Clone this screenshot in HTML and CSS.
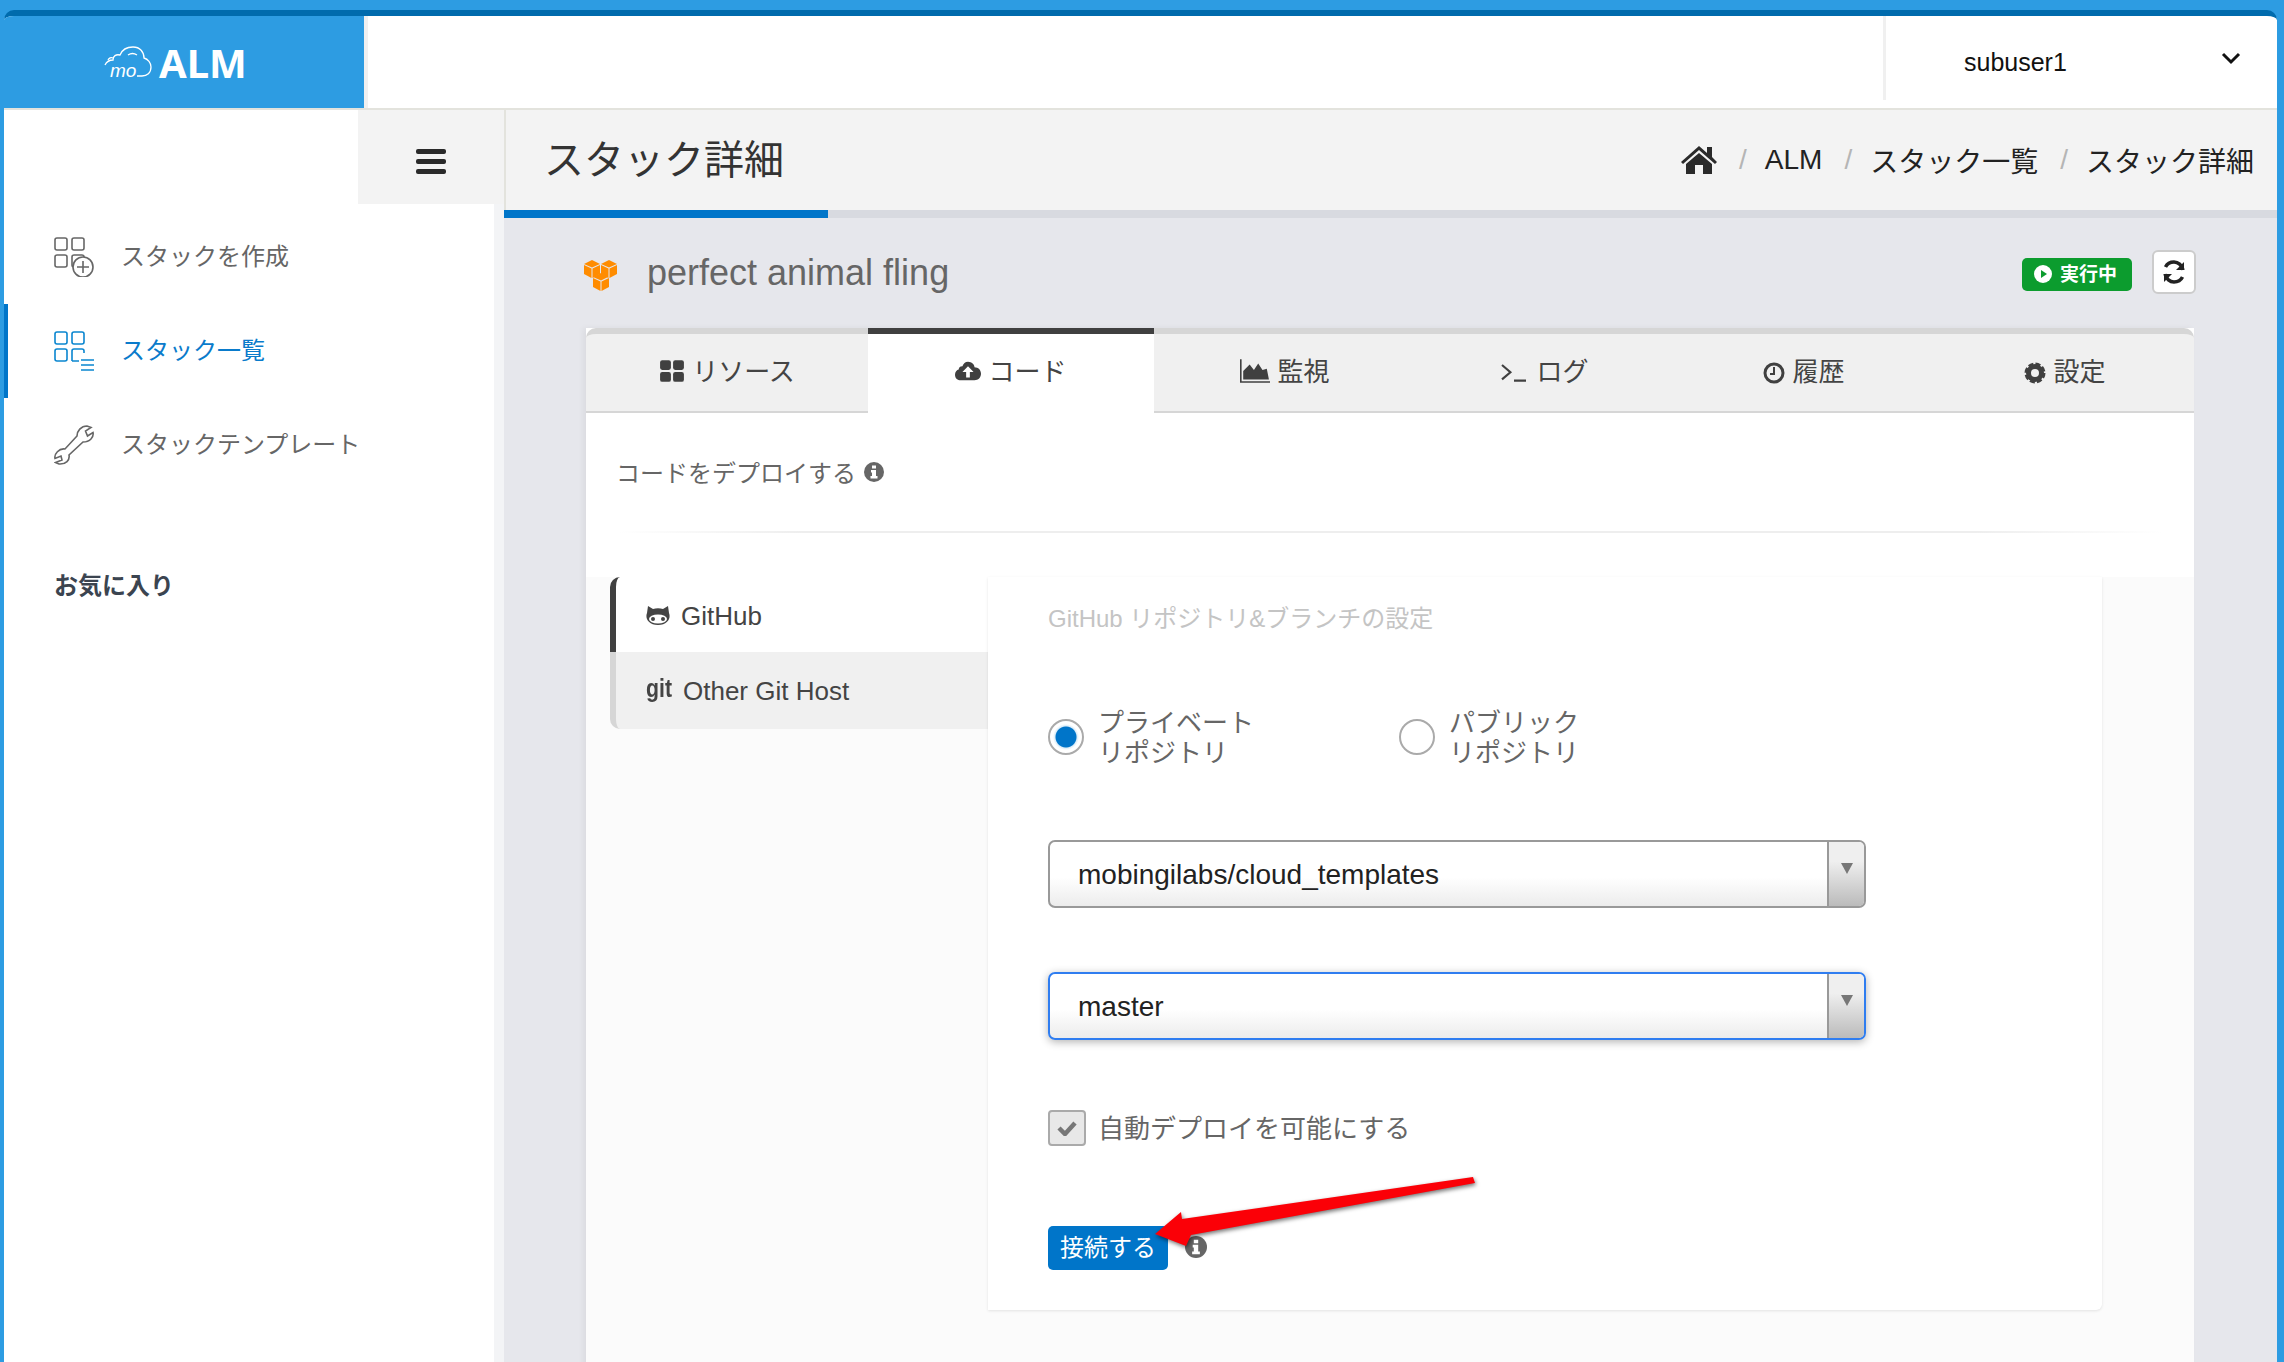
FILE: index.html
```html
<!DOCTYPE html>
<html>
<head>
  <meta charset="utf-8">
  <title>ALM</title>
  <link rel="stylesheet" href="styles.css">
</head>
<body>
  <div class="window">
    <header class="topbar">
      <div class="logo">
        <svg class="logo-cloud" viewBox="0 0 48 34">
          <path d="M1 19c2-4 5-5 8-5 0-4 3-6 7-5 2-5 7-8 13-8 7 0 11 5 11 11 4 1 7 5 7 9 0 6-4 9-9 9h-5"/>
          <path d="M4 14c1-2 3-3 5-2M24 9c3-2 6-2 9 0"/>
          <text class="logo-mo" x="6" y="31">mo</text>
        </svg>
        <span class="logo-text">ALM</span>
      </div>
      <div class="topbar-fill"></div>
      <div class="user">
        <span class="user-name">subuser1</span>
        <svg class="user-caret" viewBox="0 0 20 14"><path d="M2 3l8 8 8-8"/></svg>
      </div>
    </header>

    <div class="layout">
      <aside class="sidebar">
        <div class="toggle"><span></span><span></span><span></span></div>
        <nav>
          <a class="nav-item">
            <svg class="nav-icon" viewBox="0 0 40 40">
              <rect x="1" y="1" width="12" height="12" rx="2"/><rect x="18" y="1" width="12" height="12" rx="2"/>
              <rect x="1" y="18" width="12" height="12" rx="2"/><rect x="18" y="18" width="12" height="12" rx="2"/>
              <circle class="white" cx="29" cy="30" r="10"/><path d="M29 24v12M23 30h12"/>
            </svg>
            <span class="nav-label">スタックを作成</span>
          </a>
          <a class="nav-item active">
            <svg class="nav-icon" viewBox="0 0 40 40">
              <rect x="1" y="1" width="12" height="12" rx="2"/><rect x="18" y="1" width="12" height="12" rx="2"/>
              <rect x="1" y="18" width="12" height="12" rx="2"/>
              <path d="M18 30v-10a2 2 0 0 1 2-2h8a2 2 0 0 1 2 2v2M18 30h7M27 29h13M27 34h13M27 39h13"/>
            </svg>
            <span class="nav-label">スタック一覧</span>
          </a>
          <a class="nav-item">
            <svg class="nav-icon" viewBox="0 0 40 40">
              <path d="M23 11C23 6 27 1 33 1L37 2.500 31.500 6 33.500 11 39 7.500C40 12 36 17 29 17L15 30C16 35 12 39.500 5 39L1.500 37.500 8 35 7 31 1 33.500C0 29 5 23 11 24z"/>
            </svg>
            <span class="nav-label">スタックテンプレート</span>
          </a>
        </nav>
        <div class="favorites">お気に入り</div>
      </aside>

      <main class="content">
        <div class="titlebar">
          <h1 class="page-title">スタック詳細</h1>
          <div class="crumbs">
            <svg class="home" viewBox="0 0 36 28"><path d="M18 0l8 7V1h5v10l5 5-2 2L18 4 2 18l-2-2zM18 7l13 11v10H22v-9h-8v9H5V18z"/></svg>
            <span class="sep">/</span><span>ALM</span>
            <span class="sep">/</span><span>スタック一覧</span>
            <span class="sep">/</span><span>スタック詳細</span>
          </div>
        </div>
        <div class="progress"><div class="progress-bar"></div></div>

        <div class="page">
          <div class="stack-row">
            <svg class="aws" viewBox="0 0 33 31">
              <path d="M0 4l8-4 8 4-8 3.500z"/><path d="M17 4l8-4 8 4-8 3.500z"/>
              <path d="M0 5l7.500 3.500v9.500l-7.500-4zM16 5L8.500 8.500v9.500l7.500-4zM17 5l7.500 3.500v9.500l-7.500-4zM33 5l-7.500 3.500v9.500l7.500-4z"/>
              <path d="M9 17l8-4 7 4-7 3.500z"/>
              <path d="M9 18l7.500 3.500V31L9 27zM25 18l-7.500 3.500V31l7.500-4z"/>
            </svg>
            <span class="stack-name">perfect animal fling</span>
            <span class="badge">
              <svg class="badge-icon" viewBox="0 0 18 18"><circle cx="9" cy="9" r="9"/><path class="green" d="M7 5l6 4-6 4z"/></svg>
              実行中
            </span>
            <button class="refresh">
              <svg viewBox="0 0 22 24"><path d="M20 10C19 5 15 2 11 2 7 2 4 4 2.500 7M2 14c1 5 5 8 9 8 4 0 7-2 8.500-5"/><path class="solid" d="M21 2v8h-8zM1 22v-8h8z"/></svg>
            </button>
          </div>

          <section class="panel">
            <div class="tabs">
              <div class="tab">
                <svg class="tab-icon" viewBox="0 0 24 20"><rect x="1" y="0" width="10" height="9" rx="2"/><rect x="13" y="0" width="10" height="9" rx="2"/><rect x="1" y="11" width="10" height="9" rx="2"/><rect x="13" y="11" width="10" height="9" rx="2"/></svg>
                リソース
              </div>
              <div class="tab current">
                <svg class="tab-icon" viewBox="0 0 28 20"><path d="M6 20c-3 0-6-2-6-6 0-3 2-5 4-5.500C4 7 5 5 8 5c1-3 3-5 6-5 4 0 7 3 7 6 4 0 7 3 7 7 0 4-3 7-7 7z"/><path class="white" d="M14 5l6 6h-4v6h-4v-6H8z"/></svg>
                コード
              </div>
              <div class="tab">
                <svg class="tab-icon wide" viewBox="0 0 28 22"><path d="M0 0h1.500v20.500H28V22H0zM3 19V11l6-6 4 5 4-6 4 6 4-1 2 10z"/></svg>
                監視
              </div>
              <div class="tab">
                <svg class="tab-icon wide term" viewBox="0 0 24 20"><path d="M2 5l7 6-7 6M12 18h10"/></svg>
                ログ
              </div>
              <div class="tab">
                <svg class="tab-icon small" viewBox="0 0 22 22"><circle class="ring" cx="11" cy="11" r="9"/><path class="hand" d="M11 5v7H7"/></svg>
                履歴
              </div>
              <div class="tab">
                <svg class="tab-icon small" viewBox="0 0 22 22"><circle class="cog-teeth" cx="11" cy="11" r="9"/><circle class="ring cog" cx="11" cy="11" r="5.500"/></svg>
                設定
              </div>
            </div>

            <div class="deploy-head">
              <span class="deploy-label">コードをデプロイする</span>
              <svg class="info" viewBox="0 0 20 20"><circle cx="10" cy="10" r="10"/><path class="white" d="M8 3.500h4v3H8zM7 8h5v6h1.500v2.500h-7V14H8v-3.500H7z"/></svg>
            </div>
            <div class="deploy-rule"></div>
            <div class="deploy-gap"></div>

            <div class="source">
              <div class="source-tabs">
                <div class="source-tab current">
                  <svg class="octo" viewBox="0 0 24 20"><path d="M2 1l5 3c3-1 7-1 10 0l5-3 1 7c2 5-1 12-11 12S-1 13 1 8z"/><ellipse class="white" cx="12" cy="14" rx="9" ry="4.500"/><circle cx="7" cy="14" r="2"/><circle cx="17" cy="14" r="2"/></svg>
                  GitHub
                </div>
                <div class="source-tab"><span class="git">git</span>Other Git Host</div>
              </div>

              <div class="card">
                <h2 class="card-title">GitHub リポジトリ&amp;ブランチの設定</h2>

                <div class="radios">
                  <label class="radio-item first"><span class="radio on"></span><span class="radio-label">プライベート<br>リポジトリ</span></label>
                  <label class="radio-item"><span class="radio"></span><span class="radio-label">パブリック<br>リポジトリ</span></label>
                </div>

                <div class="select">
                  <span class="select-value">mobingilabs/cloud_templates</span>
                  <span class="select-arrow"></span>
                </div>
                <div class="select focus">
                  <span class="select-value">master</span>
                  <span class="select-arrow"></span>
                </div>

                <div class="check-row">
                  <span class="check"><svg viewBox="0 0 20 16"><path d="M2 8l6 6L18 3"/></svg></span>
                  <span class="check-label">自動デプロイを可能にする</span>
                </div>

                <div class="submit-row">
                  <button class="submit">接続する</button>
                  <svg class="info info-big" viewBox="0 0 20 20"><circle cx="10" cy="10" r="10"/><path class="white" d="M8 3.500h4v3H8zM7 8h5v6h1.500v2.500h-7V14H8v-3.500H7z"/></svg>
                </div>
              </div>
            </div>
          </section>
        </div>
      </main>
    </div>
  </div>

  <svg class="red-arrow" viewBox="0 0 340 90"><path d="M5 64L31 42 32 49 323 7 325 13 41 65 36 76z"/></svg>
</body>
</html>
```

FILE: styles.css
```css
* { box-sizing: border-box; }
html, body { height: 100%; }
body {
  margin: 0;
  height: 1362px;
  overflow: hidden;
  position: relative;
  padding: 10px 7px 0 4px;
  background: #2d9ce2;
  font-family: "Liberation Sans", "Noto Sans CJK JP", sans-serif;
  color: #333;
}
svg { display: block; flex: none; }
.white { fill: #fff; }

.window {
  height: 1352px;
  background: #fff;
  border-top: 6px solid #006bad;
  border-radius: 10px 10px 0 0;
  overflow: hidden;
}

/* top bar */
.topbar {
  display: flex;
  height: 94px;
  border-bottom: 2px solid #e3e3dd;
}
.logo {
  width: 364px;
  background: #2d9ce2;
  border-right: 4px solid #f0f0f0;
  display: flex;
  align-items: center;
  padding-left: 100px;
  gap: 7px;
  color: #fff;
}
.logo-cloud { width: 48px; height: 34px; margin-top: 2px; }
.logo-cloud path { fill: none; stroke: #fff; stroke-width: 1.300; }
.logo-mo { fill: #fff; font-size: 19px; font-style: italic; }
.logo-text {
  font-family: "Noto Sans", sans-serif;
  font-weight: 700;
  font-size: 40px;
  line-height: 1;
  margin-top: 2px;
}
.topbar-fill { flex: 1; }
.user {
  width: 394px;
  height: 84px;
  border-left: 3px solid #f0f0f0;
  display: flex;
  align-items: center;
  justify-content: space-between;
  padding: 8px 36px 0 78px;
  color: #111;
}
.user-name { font-size: 25px; }
.user-caret { width: 20px; height: 14px; margin-bottom: 8px; }
.user-caret path { fill: none; stroke: #111; stroke-width: 3; }

.layout { display: flex; height: 1252px; }

/* sidebar */
.sidebar {
  width: 500px;
  flex: none;
  border-right: 10px solid #f3f4f6;
}
.toggle {
  width: 146px;
  height: 94px;
  margin-left: 354px;
  padding-top: 8px;
  background: #f3f3f3;
  position: relative;
  display: flex;
  flex-direction: column;
  justify-content: center;
  align-items: center;
  gap: 5px;
}
.toggle span {
  width: 30px;
  height: 5px;
  border-radius: 2px;
  background: #2a2a2a;
}
nav { margin-top: 6px; }
.nav-item {
  display: flex;
  align-items: center;
  gap: 27px;
  height: 94px;
  padding-left: 46px;
  border-left: 4px solid transparent;
  font-size: 24px;
  color: #666;
}
.nav-label { margin-bottom: 5px; }
.nav-item.active { color: #0a7bcb; border-left-color: #0075c9; }
.nav-icon { width: 40px; height: 40px; }
.nav-icon rect, .nav-icon path, .nav-icon circle { fill: none; stroke: #666; stroke-width: 1.600; }
.nav-icon circle.white { fill: #fff; }
.active .nav-icon rect, .active .nav-icon path { stroke: #0a86d0; }
.favorites {
  margin: 74px 0 0 50px;
  font-size: 24px;
  font-weight: 700;
  color: #3b4450;
}

/* main */
.content {
  flex: 1;
  background: #e6e7ec;
  min-width: 0;
}
.titlebar {
  height: 100px;
  background: #f3f3f3;
  border-left: 2px solid #e3e3dd;
  display: flex;
  align-items: center;
  justify-content: space-between;
  padding: 0 23px 0 38px;
}
.page-title { margin: 0 0 6px; font-size: 40px; font-weight: 400; color: #333; }
.crumbs { display: flex; align-items: center; font-size: 28px; color: #222; }
.home { width: 36px; height: 28px; fill: #2a2a2a; }
.sep { margin: 0 18px 0 22px; color: #b5b5b5; }
.progress { height: 8px; background: #d8dae0; }
.progress-bar { width: 324px; height: 8px; background: #0075c9; }

.page { padding: 0 83px 0 82px; }
.stack-row {
  height: 110px;
  display: flex;
  align-items: center;
}
.aws { width: 33px; height: 31px; margin: 4px 30px 0 -2px; fill: #ff8c00; }
.stack-name { flex: 1; font-size: 36px; color: #666; }
.badge {
  width: 110px;
  height: 33px;
  margin: 2px 20px 0 0;
  background: #0c9c2e;
  border-radius: 5px;
  color: #fff;
  font-size: 19px;
  font-weight: 700;
  display: flex;
  align-items: center;
  gap: 8px;
  padding: 0 0 3px 12px;
}
.badge-icon { width: 18px; height: 18px; margin-top: 3px; fill: #fff; }
.green { fill: #0c9c2e; }
.refresh {
  width: 44px;
  height: 44px;
  margin: -2px -2px 0 0;
  padding: 0;
  background: #fff;
  border: 2px solid #ccc;
  border-radius: 6px;
  display: flex;
  align-items: center;
  justify-content: center;
}
.refresh svg { width: 22px; height: 24px; }
.refresh path { fill: none; stroke: #222; stroke-width: 3.500; }
.refresh path.solid { fill: #222; stroke: none; }

/* tabs */
.panel { background: #fff; box-shadow: -3px 0 6px rgba(0,0,0,.05); }
.tabs {
  display: grid;
  grid-template-columns: 282px 286px 262px 256px 264px 258px;
  height: 85px;
}
.tab {
  display: flex;
  align-items: center;
  justify-content: center;
  gap: 7px;
  padding-bottom: 7px;
  background: #f0f0f0;
  border-top: 6px solid #d6d6d6;
  border-bottom: 2px solid #d6d6d6;
  font-size: 26px;
  color: #444;
}
.tab:first-child { border-top-left-radius: 10px; }
.tab:last-child { border-top-right-radius: 10px; }
.tab.current {
  background: #fff;
  border-top-color: #404040;
  border-bottom-color: #fff;
}
.tab-icon { width: 26px; height: 22px; margin-top: 4px; fill: #404040; }
.tab-icon.wide { width: 30px; height: 24px; }
.tab-icon.small { width: 22px; height: 22px; margin-top: 8px; }
.term path { fill: none; stroke: #404040; stroke-width: 1.800; }
.ring { fill: none; stroke: #404040; stroke-width: 3; }
.hand { fill: none; stroke: #404040; stroke-width: 2; }
.cog-teeth { fill: #404040; stroke: #404040; stroke-width: 3; stroke-dasharray: 5 2.100; }
.ring.cog { fill: #f0f0f0; stroke: #404040; }

.deploy-head {
  height: 118px;
  padding-left: 30px;
  display: flex;
  align-items: center;
  gap: 8px;
  font-size: 24px;
  color: #666;
}
.deploy-label { margin-bottom: 2px; }
.info { width: 20px; height: 20px; fill: #666; }
.deploy-rule {
  height: 2px;
  margin: 0 32px;
  background: linear-gradient(to right, #fff, #eee 12%, #eee 88%, #fff);
}
.deploy-gap { height: 44px; }

/* repository source */
.source {
  display: flex;
  height: 800px;
  padding-left: 24px;
  background: #fbfbfb;
  align-items: flex-start;
}
.source-tabs { width: 378px; flex: none; }
.source-tab {
  height: 77px;
  display: flex;
  align-items: center;
  padding: 2px 0 0 30px;
  background: #f0f0f0;
  border-left: 6px solid #d6d6d6;
  border-bottom-left-radius: 10px;
  font-size: 26px;
  color: #444;
}
.source-tab.current {
  height: 75px;
  padding-top: 4px;
  background: #fff;
  border-left-color: #404040;
  border-radius: 10px 0 0 0;
  gap: 11px;
}
.octo { width: 24px; height: 20px; margin-top: -4px; fill: #444; }
.git { font-size: 25px; font-weight: 700; margin: -6px 9px 0 0; transform: scaleX(.85); transform-origin: 0 50%; width: 28px; }
.card {
  width: 1114px;
  height: 733px;
  padding: 28px 0 0 60px;
  background: #fff;
  border-radius: 0 0 6px 0;
  box-shadow: 0 1px 3px rgba(0,0,0,.1);
}
.card-title {
  margin: 0;
  font-size: 24px;
  line-height: 28px;
  font-weight: 400;
  color: #c4c4c4;
}
.radios { display: flex; height: 60px; margin-top: 74px; font-size: 26px; line-height: 30px; color: #666; }
.radio-item { display: flex; align-items: center; gap: 14px; }
.radio-item.first { width: 351px; }
.radio-label { margin-top: 2px; }
.radio {
  width: 36px;
  height: 36px;
  border: 2px solid #aaa;
  border-radius: 50%;
  background: #fff;
  flex: none;
}
.radio.on {
  background: radial-gradient(circle, #0075c9 0, #0075c9 10px, #d9ecf8 11px, #fff 13px);
}
.select {
  width: 818px;
  height: 68px;
  margin-top: 64px;
  border: 2px solid #999;
  border-radius: 7px;
  background: linear-gradient(#fff 55%, #ececec);
  display: flex;
  align-items: center;
  justify-content: space-between;
  padding-left: 28px;
  overflow: hidden;
}
.radios + .select { margin-top: 73px; }
.select.focus {
  border-color: #2f7df0;
  box-shadow: 0 2px 8px rgba(0,0,0,.3);
}
.select-value { font-size: 28px; color: #222; margin-top: 2px; }
.select-arrow {
  width: 37px;
  align-self: stretch;
  border-left: 2px solid #999;
  background: linear-gradient(#efefef 30%, #bbb);
  position: relative;
}
.select-arrow::after {
  content: "";
  position: absolute;
  left: 12px;
  top: 21px;
  border-style: solid;
  border-width: 11px 6px 0;
  border-color: #777 transparent transparent;
}
.check-row {
  display: flex;
  align-items: center;
  gap: 12px;
  height: 36px;
  margin-top: 70px;
  font-size: 26px;
  line-height: 30px;
  color: #666;
}
.check-label { margin-top: 2px; }
.check {
  width: 38px;
  height: 36px;
  border: 2px solid #aaa;
  border-radius: 4px;
  background: #e8e8e8;
  display: flex;
  align-items: center;
  justify-content: center;
}
.check svg { width: 20px; height: 16px; }
.check path { fill: none; stroke: #777; stroke-width: 4.500; }
.submit-row { display: flex; align-items: center; gap: 17px; margin-top: 80px; }
.submit {
  width: 120px;
  height: 44px;
  padding: 0 0 6px;
  border: 0;
  border-radius: 5px;
  background: #0075c9;
  color: #fff;
  font: inherit;
  font-size: 24px;
}
.info-big { width: 22px; height: 22px; margin-top: -3px; }

/* annotation drawn over the page */
.red-arrow {
  position: absolute;
  left: 1150px;
  top: 1170px;
  width: 340px;
  height: 90px;
  fill: #fb0007;
  filter: drop-shadow(1px 2px 2px rgba(0,0,0,.55));
}
```
